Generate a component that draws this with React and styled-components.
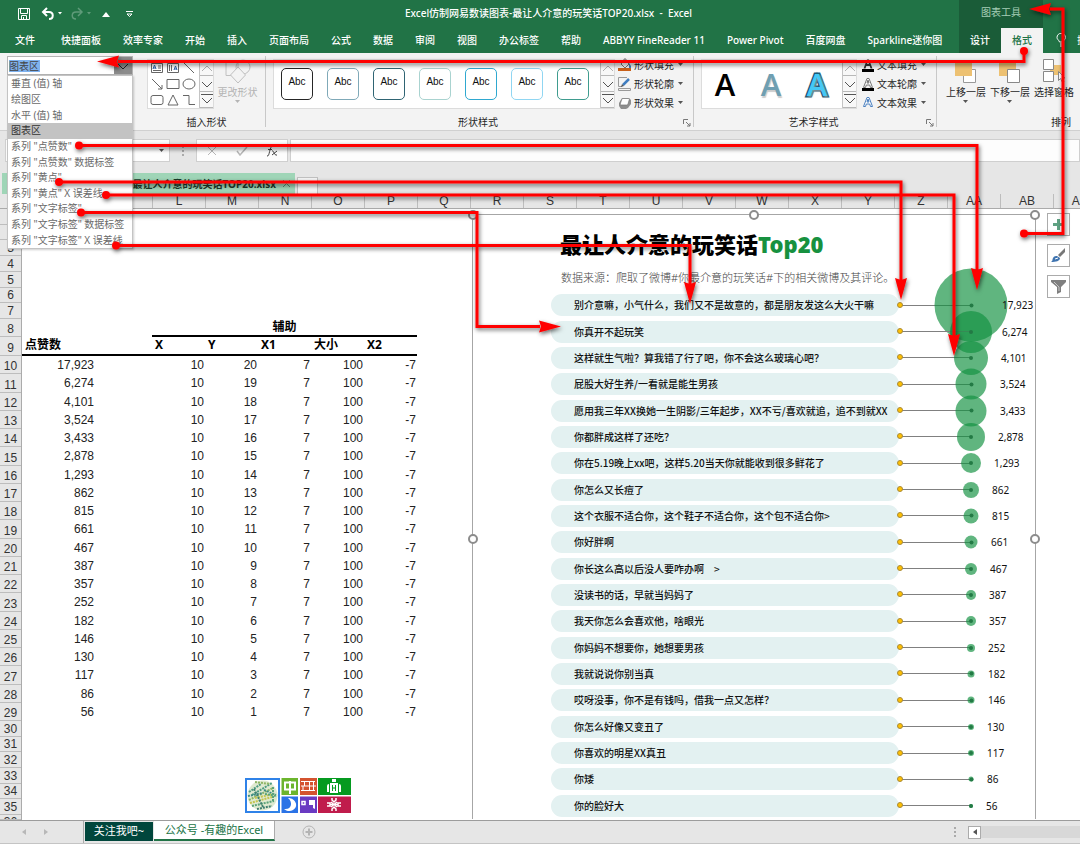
import React from "react";
import styled, { createGlobalStyle } from "styled-components";

const GlobalStyle = createGlobalStyle`
  *, *::before, *::after { box-sizing: border-box; }
  body {
    margin: 0;
    background: #e6e6e6;
    font-family: "Noto Sans", "Noto Sans CJK SC", sans-serif;
    font-size: 10px;
    color: #262626;
  }
  button, input, select {
    margin: 0;
    padding: 0;
    border: 0;
    border-radius: 0;
    background: none;
    font: inherit;
    color: inherit;
  }
  svg { display: block; flex: none; }
`;

const Page = styled.div`
  position: relative;
  display: flex;
  flex-direction: column;
  overflow: hidden;
`;

/* ---------- title bar and tabs ---------- */

const Header = styled.header`
  display: flex;
  background: #217346;
  color: #fff;
`;

const HeaderMain = styled.div`
  flex: 1 1 auto;
  min-width: 0;
`;

const TitleRow = styled.div`
  display: flex;
  align-items: center;
  height: 28px;
`;

const QuickAccess = styled.div`
  display: flex;
  flex: 0 0 138px;
  padding-left: 17px;
`;

const QuickButton = styled.button`
  width: ${(p) => p.$width}px;
  height: 16px;
`;

const WindowTitle = styled.h1`
  flex: 1;
  margin: 0;
  padding-bottom: 3px;
  font-size: 10px;
  font-weight: 500;
  line-height: 16px;
  text-align: center;
  white-space: pre;
`;

const TabList = styled.nav`
  display: flex;
  height: 25px;
  padding-left: 4px;
`;

const RibbonTab = styled.button`
  flex: none;
  padding: 0 11px 2px;
  height: 25px;
  font-weight: 500;
  white-space: nowrap;
  background: ${(p) => (p.$active ? "#f3f3f3" : "transparent")};
  color: ${(p) => (p.$active ? "#217346" : "#fff")};

  &:first-child { margin-right: ${(p) => (p.$context ? 0 : 4)}px; }
`;

const ContextTools = styled.div`
  flex: 0 0 83px;
  background: #1a5c38;
`;

const ContextLabel = styled.div`
  height: 28px;
  padding-bottom: 3px;
  line-height: 25px;
  text-align: center;
  color: #a5cdb6;
`;

const ContextTabs = styled.div`
  display: grid;
  grid-template-columns: 1fr 1fr;
`;

const TellMe = styled.div`
  display: flex;
  flex: 0 0 37px;
  align-items: center;
  gap: 10px;
  height: 25px;
  margin-top: 28px;
  padding: 0 0 2px 13px;
  overflow: hidden;
  white-space: nowrap;
`;

/* ---------- ribbon ---------- */

const Ribbon = styled.section`
  display: flex;
  height: 78px;
  background: #f3f3f3;
  border-bottom: 1px solid #d0d0d0;
`;

const Group = styled.div`
  display: flex;
  flex-direction: column;
  flex: ${(p) => (p.$width ? `0 0 ${p.$width}px` : "1 0 0")};
  position: relative;
  padding: 6px 0 0 7px;

  &::after {
    content: "";
    position: absolute;
    right: 0;
    top: 3px;
    width: 1px;
    height: 71px;
    background: ${(p) => (p.$width ? "#c8c8c8" : "transparent")};
  }
`;

const GroupBody = styled.div`
  display: flex;
  height: 50px;
  gap: ${(p) => p.$gap || 0}px;
`;

const GroupFooter = styled.div`
  display: flex;
  align-items: center;
  justify-content: center;
  height: 16px;
  margin-top: 4px;
  padding-left: ${(p) => p.$shift || 0}px;
`;

const GroupName = styled.span`
  flex: 1;
  text-align: center;
`;

const Launcher = styled.button`
  width: 8px;
  height: 8px;
  margin: 3px 3px 0 0;
`;

const Gallery = styled.div`
  display: flex;
  flex: none;
  height: 50px;
  border: 1px solid #dcdcdc;
  background: #fff;
`;

const ShapeGrid = styled.div`
  display: grid;
  grid-template-columns: repeat(3, 16px);
  grid-template-rows: repeat(3, 16px);
  width: 51px;
  padding-left: 1px;
`;

const PlainButton = styled.button`
  display: grid;
  place-items: center;
`;

const Scroller = styled.div`
  display: grid;
  grid-template-rows: repeat(3, 16px);
  width: 14px;
  background: #f8f8f8;
  border-left: 1px solid #c4c4c4;
`;

const ScrollButton = styled.button`
  display: grid;
  place-items: center;
  border-bottom: 1px solid #b8b8b8;
`;

const ChangeShape = styled.button`
  display: flex;
  flex-direction: column;
  align-items: center;
  width: 47px;
  color: #b4b4b4;
  line-height: 16px;
`;

const StyleCards = styled.div`
  display: flex;
  align-items: center;
  gap: 14px;
  width: 326px;
  padding: 0 7px;
`;

const StyleCard = styled.button`
  flex: 0 0 32px;
  height: 32px;
  padding-bottom: 6px;
  border: 1px solid ${(p) => p.$color};
  border-radius: 5px;
  background: #fff;
  color: #111;
  font-family: "Liberation Sans", sans-serif;
  font-size: 10px;
`;

const CommandList = styled.div`
  display: grid;
  grid-template-rows: repeat(3, 19px);
  margin-top: -4px;
`;

const Command = styled.button`
  display: flex;
  align-items: center;
  gap: 2px;
  white-space: nowrap;
`;

const CommandText = styled.span`
  padding-right: 2px;
`;

const WordArtCards = styled.div`
  display: grid;
  grid-template-columns: repeat(3, 46px);
  width: 140px;
`;

const WordArt = styled.button`
  font-family: "Open Sans", sans-serif;
  font-size: 31px;
  font-weight: 600;
  line-height: 48px;
  color: ${(p) => p.$color};
  -webkit-text-stroke: ${(p) => p.$stroke || "0 transparent"};
  paint-order: stroke fill;
  text-shadow: ${(p) => p.$shadow || "none"};
`;

const ArrangeButton = styled.button`
  display: flex;
  flex-direction: column;
  align-items: center;
  flex: 0 0 44px;
  line-height: 16px;
  white-space: nowrap;
`;

const ElementPicker = styled.div`
  position: relative;
  flex: 0 0 140px;
  padding: 3px 7px 0;
`;

const PickerField = styled.label`
  display: flex;
  width: 126px;
  height: 19px;
  border: 1px solid #b4b4b4;
  background: #fff;
`;

const PickerSelect = styled.select`
  flex: 1;
  min-width: 0;
  padding-left: 1px;
  appearance: none;
  background: linear-gradient(#7fb2ee, #7fb2ee) 1px 3px / 31px 12px no-repeat;
  color: #444;
`;

const PickerArrow = styled.span`
  display: grid;
  place-items: center;
  width: 18px;
  background: #8c8c8c;
`;

const PickerList = styled.ul`
  position: absolute;
  z-index: 3;
  left: 7px;
  top: 22px;
  display: flex;
  flex-direction: column;
  width: 126px;
  height: 174px;
  margin: 0;
  padding: 0;
  list-style: none;
  border: 1px solid #c4c4c4;
  background: #fff;
  box-shadow: 1px 1px 2px rgba(0, 0, 0, 0.2);
`;

const PickerOption = styled.li`
  display: flex;
  flex: 1;
  align-items: center;
  padding-left: 3px;
  color: ${(p) => (p.$selected ? "#333" : "#6a6a6a")};
  background: ${(p) => (p.$selected ? "#c3c3c3" : "transparent")};
  line-height: 15px;
  white-space: nowrap;
`;

/* ---------- formula bar and file tabs ---------- */

const FormulaRow = styled.div`
  display: flex;
  height: 42px;
  padding: 8px 0 11px 5px;
  background: #e6e6e6;
`;

const NameBox = styled.div`
  display: flex;
  align-items: center;
  flex: 0 0 165px;
  height: 23px;
  padding-right: 4px;
  border: 1px solid #cfcfcf;
  background: #fdfdfd;
`;

const NameInput = styled.input`
  flex: 1;
  min-width: 0;
`;

const Grip = styled.span`
  flex: 0 0 26px;
  align-self: center;
  height: 10px;
  background: radial-gradient(circle, #aaa 1px, transparent 1px) center / 4px 4px repeat-y;
`;

const FormulaButtons = styled.div`
  display: grid;
  grid-template-columns: repeat(3, 30px);
  height: 23px;
  border: 1px solid #cfcfcf;
  background: #fdfdfd;
`;

const FormulaInput = styled.input`
  flex: 1;
  height: 23px;
  margin-left: 2px;
  border: 1px solid #cfcfcf;
  background: #fdfdfd;
`;

const FileTabs = styled.div`
  display: flex;
  align-items: flex-end;
  gap: 2px;
  height: 21px;
  padding-left: 2px;
`;

const FileTab = styled.button`
  display: flex;
  align-items: center;
  justify-content: flex-end;
  gap: 6px;
  width: 293px;
  height: 21px;
  padding: 0 4px;
  background: #9fd5b7;
  color: #1c3a2a;
  font-weight: 700;
  white-space: nowrap;
`;

const NewFileTab = styled.button`
  width: 21px;
  height: 17px;
  border: 1px solid #c0c0c0;
  border-bottom: 0;
  background: #f5f5f5;
`;

/* ---------- worksheet ---------- */

const ColumnHeads = styled.div`
  display: flex;
  height: 15px;
  padding-left: 22px;
  overflow: hidden;
  background: #e6e6e6;
  border-bottom: 1px solid #ababab;
  font-family: "Liberation Sans", sans-serif;
  font-size: 12px;
  line-height: 14px;
  color: #333;
`;

const ColumnHead = styled.div`
  flex: 0 0 ${(p) => p.$width}px;
  text-align: center;
  border-right: 1px solid #bdbdbd;
`;

const Sheet = styled.main`
  display: flex;
  align-items: flex-start;
  overflow: hidden;
  background: #fff;
`;

const RowHeads = styled.div`
  flex: 0 0 22px;
  background: #e6e6e6;
  border-right: 1px solid #ababab;
  font-family: "Liberation Sans", sans-serif;
  font-size: 12px;
  color: #333;
`;

const RowBlock = styled.div`
  display: flex;
  flex-direction: column;
  height: ${(p) => p.$height}px;
`;

const RowHead = styled.div`
  display: flex;
  flex: 1 1 0;
  min-height: 0;
  align-items: ${(p) => (p.$cut ? "flex-start" : "flex-end")};
  justify-content: center;
  overflow: hidden;
  line-height: 14px;
  border-bottom: 1px solid #bdbdbd;
`;

const Cells = styled.div`
  flex: 0 0 450px;
  padding-top: 110px;
`;

const DataTable = styled.table`
  display: block;
  font-family: "Liberation Sans", sans-serif;
  font-size: 12px;
  color: #222;
`;

const TableHead = styled.thead`
  display: block;
  font-family: "Noto Sans", "Noto Sans CJK SC", sans-serif;
  font-size: 12px;
  color: #000;
`;

const TableBody = styled.tbody`
  display: flex;
  flex-direction: column;
  height: 365px;
`;

const TableRow = styled.tr`
  display: grid;
  flex: 1 1 0;
  grid-template-columns: 130px repeat(5, 53px);
  width: 396px;
`;

const HeadCell = styled.th`
  grid-column: ${(p) => p.$span || "auto"};
  height: ${(p) => (p.$span ? 18 : 19)}px;
  padding: 0 0 0 ${(p) => (p.$span ? 0 : 3)}px;
  border-bottom: 2px solid #000;
  line-height: 16px;
  font-weight: 700;
  text-align: ${(p) => (p.$span ? "center" : "left")};
`;

const Cell = styled.td`
  padding: 0 ${(p) => (p.$wide ? 58 : 1)}px 0 0;
  line-height: 18px;
  text-align: right;
`;

const Tiles = styled.div`
  padding: 57px 0 0 223px;
`;

/* ---------- chart ---------- */

const ChartFrame = styled.section`
  position: relative;
  flex: 1 1 auto;
  min-width: 0;
  margin-top: 5px;
  border: 1px solid #a6a6a6;
  border-bottom: 0;
`;

const Handle = styled.span`
  position: absolute;
  left: ${(p) => p.$x};
  top: ${(p) => p.$y}px;
  width: 10px;
  height: 10px;
  margin: -5px 0 0 -5px;
  border: 2px solid #8c8c8c;
  border-radius: 50%;
  background: #fff;
`;

const ChartTitle = styled.h2`
  margin: 13px 0 0 87px;
  font-size: 22px;
  font-weight: 900;
  line-height: 32px;
  color: #000;
  white-space: nowrap;
`;

const Accent = styled.span`
  color: #17913f;
`;

const ChartSource = styled.p`
  margin: 10px 0 0 88px;
  font-size: 11px;
  font-weight: 300;
  line-height: 16px;
  color: #444;
  white-space: nowrap;
`;

const Plot = styled.div`
  display: flex;
  flex-direction: column;
  height: 527px;
  margin-top: 6px;
  padding-left: 78px;
`;

const PlotRow = styled.div`
  display: flex;
  flex: 1 1 0;
  align-items: center;
`;

const Pill = styled.div`
  flex: 1 1 0;
  height: 22px;
  padding-left: 23px;
  border-radius: 11px;
  background: #e3f1f1;
  font-family: "Noto Sans CJK SC", sans-serif;
  font-weight: 500;
  line-height: 21px;
  color: #111;
  white-space: nowrap;
`;

const Connector = styled.div`
  position: relative;
  flex: 0 0 72px;
  height: 1px;
  background: #808080;

  &::before {
    content: "";
    position: absolute;
    left: -2px;
    top: -3px;
    width: 6px;
    height: 6px;
    border: 1px solid #a98a3a;
    border-radius: 50%;
    background: #ffc000;
  }
`;

const Bubble = styled.span`
  position: absolute;
  left: 100%;
  top: 50%;
  width: ${(p) => p.$size}px;
  height: ${(p) => p.$size}px;
  border-radius: 50%;
  transform: translate(-50%, -50%);
  background: rgba(18, 145, 64, 0.67);

  &::after {
    content: "";
    position: absolute;
    inset: 0;
    width: 4px;
    height: 4px;
    margin: auto;
    border-radius: 50%;
    background: #237a45;
  }
`;

const Amount = styled.span`
  position: relative;
  flex: 0 0 64px;
  padding-left: ${(p) => p.$offset}px;
  line-height: 16px;
  color: #111;
`;

const ChartButtons = styled.div`
  display: flex;
  flex: 0 0 44px;
  flex-direction: column;
  gap: 8px;
  padding: 4px 0 0 11px;
`;

const ChartButton = styled.button`
  display: grid;
  place-items: center;
  width: 23px;
  height: 23px;
  border: 1px solid #ababab;
  background: #fff;
`;

/* ---------- sheet tabs ---------- */

const SheetBar = styled.footer`
  display: flex;
  height: 24px;
  border-top: 1px solid #9c9c9c;
  border-bottom: 1px solid #c4c4c4;
  background: #e6e6e6;
`;

const SheetArrows = styled.div`
  display: flex;
  flex: 0 0 84px;
  align-items: center;
  gap: 16px;
  padding-left: 21px;
  border-right: 1px solid #ababab;
`;

const SheetTab = styled.button`
  flex: 0 0 ${(p) => p.$width}px;
  height: ${(p) => (p.$active ? 20 : 19)}px;
  margin: ${(p) => (p.$active ? "0" : "1px 1px 0")};
  padding-bottom: ${(p) => (p.$active ? 0 : 2)}px;
  background: ${(p) => (p.$active ? "#fff" : "#00463c")};
  border-bottom: ${(p) => (p.$active ? "2px solid #217346" : "0")};
  border-right: ${(p) => (p.$active ? "1px solid #ababab" : "0")};
  color: ${(p) => (p.$active ? "#217346" : "#fff")};
  font-size: 11px;
  line-height: 16px;
  white-space: nowrap;
`;

const AddSheet = styled.button`
  height: 22px;
  padding-left: 27px;
`;

const ScrollArea = styled.div`
  display: flex;
  align-items: center;
  height: 22px;
  margin-left: auto;
`;

const ScrollTrack = styled.div`
  width: 99px;
  height: 12px;
  background: #d8d8d8;
`;

const ScrollLeft = styled.button`
  display: grid;
  place-items: center;
  width: 13px;
  height: 13px;
  border: 1px solid #ababab;
  background: #fff;
`;

const Annotations = styled.svg`
  position: absolute;
  z-index: 5;
  left: 0;
  top: 0;
  pointer-events: none;
`;

/* ---------- content ---------- */

const tabs = ["文件", "快捷面板", "效率专家", "开始", "插入", "页面布局", "公式", "数据", "审阅", "视图", "办公标签", "帮助", "ABBYY FineReader 11", "Power Pivot", "百度网盘", "Sparkline迷你图"];

const elements = ["垂直 (值) 轴", "绘图区", "水平 (值) 轴", "图表区", "系列 \"点赞数\"", "系列 \"点赞数\" 数据标签", "系列 \"黄点\"", "系列 \"黄点\" X 误差线", "系列 \"文字标签\"", "系列 \"文字标签\" 数据标签", "系列 \"文字标签\" X 误差线"];

const cardColors = ["#262626", "#7fa9b8", "#2f6473", "#a9d3d0", "#2fa8d0", "#90d6f2", "#3f9c8f"];

const columns = ["L", "M", "N", "O", "P", "Q", "R", "S", "T", "U", "V", "W", "X", "Y", "Z", "AA", "AB", "AC"];

const jokes = [
  ["别介意嘛，小气什么，我们又不是故意的，都是朋友发这么大火干嘛", 17923, 73],
  ["你真开不起玩笑", 6274, 42],
  ["这样就生气啦？算我错了行了吧，你不会这么玻璃心吧？", 4101, 34],
  ["屁股大好生养/一看就是能生男孩", 3524, 31],
  ["愿用我三年XX换她一生阴影/三年起步，XX不亏/喜欢就追，追不到就XX", 3433, 31],
  ["你都胖成这样了还吃？", 2878, 28],
  ["你在5.19晚上xx吧，这样5.20当天你就能收到很多鲜花了", 1293, 20],
  ["你怎么又长痘了", 862, 16],
  ["这个衣服不适合你，这个鞋子不适合你，这个包不适合你>", 815, 15],
  ["你好胖啊", 661, 13],
  ["你长这么高以后没人要咋办啊　>", 467, 12],
  ["没读书的话，早就当妈妈了", 387, 10],
  ["我天你怎么会喜欢他，啥眼光", 357, 10],
  ["你妈妈不想要你，她想要男孩", 252, 8],
  ["我就说说你别当真", 182, 7],
  ["哎呀没事，你不是有钱吗，借我一点又怎样？", 146, 7],
  ["你怎么好像又变丑了", 130, 6],
  ["你喜欢的明星XX真丑", 117, 6],
  ["你矮", 86, 5],
  ["你的脸好大", 56, 4],
];

const range = (from, to) => Array.from({ length: to - from + 1 }, (_, i) => from + i);

const rowBlocks = [
  [110, range(1, 7)],
  [18, [8]],
  [19, [9]],
  [365, range(10, 29)],
  [94, range(30, 35)],
  [5, [36]],
];

/* ---------- icons ---------- */

const Caret = ({ color = "#555" }) => (
  <svg width="6" height="4" viewBox="0 0 6 4"><path d="M0 0h5L2.5 3z" fill={color} /></svg>
);

const Chevron = ({ up, bar, color = "#555" }) => (
  <svg width="12" height="14" viewBox="0 0 12 14" fill="none" stroke={color}>
    {bar && <path d="M0 1.5h12" />}
    <path d={up ? "M1 10l5-5 5 5" : "M1 5l5 5 5-5"} />
  </svg>
);

const GalleryScroller = () => (
  <Scroller>
    <ScrollButton aria-label="上一行"><Chevron up color="#b0b0b0" /></ScrollButton>
    <ScrollButton aria-label="下一行"><Chevron /></ScrollButton>
    <ScrollButton aria-label="更多"><Chevron bar /></ScrollButton>
  </Scroller>
);

const LauncherIcon = () => (
  <svg width="8" height="8" viewBox="0 0 8 8" fill="none" stroke="#777">
    <path d="M.5 5V.5H5M3 3l4 4M7 4v3H4" />
  </svg>
);

const shapes = [
  ["文本框", <><path d="M1.5 2.500h11v9h-11zM8 5h3M8 7h3M3 9.500h8" /><path d="M3 8l1.500-4L6 8M3.500 7h2" stroke="#2b5fa5" /></>],
  ["竖排文本框", <><path d="M1.5 2.500h11v9h-11zM3.500 4v6M5.500 4v6" /><path d="M8 9l1.500-4L11 9M8.500 8h2" stroke="#2b5fa5" /></>],
  ["直线", <path d="M2 2l10 10" />],
  ["箭头", <path d="M2 2l10 10M12 8v4H8" />],
  ["矩形", <path d="M1 2.500h12v9H1z" />],
  ["椭圆", <ellipse cx="7" cy="7" rx="6" ry="5" />],
  ["圆角矩形", <rect x="1" y="2.5" width="12" height="9" rx="2" />],
  ["三角形", <path d="M7 2l5 10H2z" />],
  ["连接符", <path d="M1 2.500h6v9h6" />],
];

const FillIcon = () => (
  <svg width="14" height="14" viewBox="0 0 14 14">
    <path d="M3 6l4-4 4 4-4 4zM6 4V1h2v3" fill="#fff" stroke="#777" />
    <path d="M11 5l2 3v2h-2z" fill="#3f7dc0" />
    <path d="M0 10h13v3H0z" fill="#c8601a" />
  </svg>
);
const OutlineIcon = () => (
  <svg width="14" height="14" viewBox="0 0 14 14" fill="none">
    <path d="M9 .5H.5v9H4M.5 11.500h12v2H.5z" stroke="#9a9a9a" />
    <path d="M5 8l6-6" stroke="#3f7dc0" strokeWidth="2.500" />
    <path d="M3 10l3-1-2-2z" fill="#555" />
  </svg>
);
const EffectIcon = () => (
  <svg width="14" height="14" viewBox="0 0 14 14">
    <path d="M4 2h7l2 2v4l-3 4-2 1H3l-2-3V7z" fill="#8f8f8f" />
    <path d="M5 2.500h5.500q1 0 .8 1L10 8q-.3 1-1.300 1H3q-1 0-.8-1l1.500-4.500q.3-1 1.300-1z" fill="#fff" stroke="#777" strokeWidth=".7" />
  </svg>
);
const LetterIcon = ({ fill, stroke, bar }) => (
  <svg width="14" height="14" viewBox="0 0 14 14">
    <path d="M2.500 10.500L6 1.500h2l3.500 9h-2L8.700 8H5.300l-.8 2.500zM6 6h2L7 3z" fill={fill} stroke={stroke} />
    {bar && <path d="M1 11h12v3H1z" fill="#000" />}
  </svg>
);

const ArrangeIcon = ({ kind }) => (
  <svg width="26" height="25" viewBox="0 0 26 25">
    {kind === "front" && (
      <>
        <path d="M10.500 10.500h12v13h-12z" fill="#fff" stroke="#999" />
        <path d="M2 1h17v16H2z" fill="#edc172" />
      </>
    )}
    {kind === "back" && (
      <>
        <path d="M2 1h17v16H2z" fill="#edc172" />
        <path d="M10.500 10.500h12v13h-12z" fill="#fff" stroke="#888" />
      </>
    )}
    {kind === "pane" && (
      <>
        <path d="M9 6h11v10H9z" fill="#edc172" />
        <path d="M2.500.5h10v10h-10zM2.500 12.500h10v10h-10z" fill="#fff" stroke="#888" />
        <path d="M17.500 12.500v9l2-2 2 4 1.500-1-2-3.500h3z" fill="#fff" stroke="#888" />
      </>
    )}
  </svg>
);

const LogoTiles = () => (
  <svg width="106" height="35" viewBox="0 0 106 35">
    <path d="M1 1h33v33H1z" fill="#fff" stroke="#2f82e8" strokeWidth="2" />
    <circle cx="17.500" cy="17.500" r="15" fill="#dfe9d0" />
    <g fill="none" strokeWidth="2" strokeDasharray="2 1">
      <path d="M4 14l12-8M7 17L27 5" stroke="#4c9b82" />
      <path d="M10 4l15 2M4 22l24-12" stroke="#8fb565" />
      <path d="M3 18l15-3M19 12l12 5" stroke="#3f8c86" />
      <path d="M5 25l22-6M10 20l19-4" stroke="#c5c54f" />
      <path d="M7 28l22-5M20 16l12 2M28 9v15" stroke="#5ba37a" />
      <path d="M12 31l15-3M9 11l9 18" stroke="#3f7f70" />
    </g>
    <path d="M36.500 0H53v17H36.500z" fill="#6cb52d" />
    <path d="M40 4.500h10v7H40zM45 3v13" fill="none" stroke="#fff" strokeWidth="2" />
    <path d="M55 0h17v17H55z" fill="#d4532f" />
    <path d="M56 3.500h14M56 8h15M56 12.500h14M59.500 3v5M64.500 3v9M68.500 3v9M58 8v5" fill="none" stroke="#fff" />
    <path d="M73 0h33v17H73z" fill="#059a20" />
    <path d="M87 1h4v3h-4zM85 5h8v10h-8zM82 8q0-2 2-2v8h-2zM94 6q2 0 2 2v6h-2z" fill="#fff" />
    <path d="M87.500 7v6M90.500 7v6M87.500 10h3" stroke="#059a20" />
    <path d="M36.500 18.500H53V35H36.500z" fill="#2b73e6" />
    <path d="M43 20c8 0 11 9 5 12-3 2-7 1-9-1 8 1 9-7 4-11z" fill="#fff" />
    <path d="M55 18.500h17V35H55z" fill="#6a3bc2" />
    <path d="M57 23.500h3v3h-3z" fill="none" stroke="#fff" strokeWidth="1.500" />
    <path d="M64 22h6v9l-2-1v-3h-4z" fill="#fff" />
    <path d="M73 18.500h33V35H73z" fill="#c01c4c" />
    <path d="M87 20v2l2 2 2-2v-2M87 33v-2l2-2 2 2v2M82 25h3v3h-3M96 25h-3v3h3M85 26.500h8M86 24l6 5M92 24l-6 5" fill="none" stroke="#fff" strokeWidth="1.500" />
  </svg>
);

const ArrowHead = ({ x, y, angle }) => (
  <path d="M0 0L-22-6L-20 0L-22 6z" transform={`translate(${x} ${y}) rotate(${angle})`} fill="#f00" stroke="none" />
);

const arrows = [
  { d: "M1024 51V61.500H118", dot: [1024, 51], head: [97, 61.5, 180] },
  { d: "M1024 233.500H1063V9H1050", dot: [1024, 233.5], head: [1029, 9, 180] },
  { d: "M79 145.500H977V270", dot: [79, 145.5], head: [977, 290, 90] },
  { d: "M59 182H901V280", dot: [59, 182], head: [901, 300, 90] },
  { d: "M106 195H954V336", dot: [106, 195], head: [954, 356, 90] },
  { d: "M81 212.500H477V326.500H540", dot: [81, 212.5], head: [561, 326.5, 0] },
  { d: "M116 245.500H690V285", dot: [116, 245.5], head: [690, 304, 90] },
];

export default function App() {
  return (
    <Page>
      <GlobalStyle />
      <Header>
        <HeaderMain>
          <TitleRow>
            <QuickAccess>
              <QuickButton $width={24} aria-label="保存">
                <svg width="14" height="14" viewBox="0 0 14 14" fill="none" stroke="#fff">
                  <path d="M1.5 1.500h11v11h-11zM3.500 1.500v5h7v-5M4.500 12.500v-4h5v4M6.500 10v2" />
                </svg>
              </QuickButton>
              <QuickButton $width={30} aria-label="撤消">
                <svg width="22" height="14" viewBox="0 0 22 14" fill="none">
                  <path d="M6 1L2 5l4 4M2 5h6c5 0 5 7 0 7" stroke="#fff" strokeWidth="2" />
                  <path d="M17 5h4l-2 2.500z" fill="#fff" />
                </svg>
              </QuickButton>
              <QuickButton $width={30} aria-label="恢复">
                <svg width="22" height="14" viewBox="0 0 22 14" fill="none">
                  <path d="M7 1l4 4-4 4M11 5H5c-5 0-5 7 0 7" stroke="#5f9b7a" strokeWidth="1.500" />
                  <path d="M16 5h4l-2 2.500z" fill="#5f9b7a" />
                </svg>
              </QuickButton>
              <QuickButton $width={24} aria-label="形状">
                <svg width="10" height="14" viewBox="0 0 10 14"><path d="M1 10l4-5 4 5z" fill="#fff" /></svg>
              </QuickButton>
              <QuickButton $width={10} aria-label="自定义">
                <svg width="10" height="14" viewBox="0 0 10 14" fill="none" stroke="#fff"><path d="M1 4.500h7M2 7h5L4.500 9.500z" /></svg>
              </QuickButton>
            </QuickAccess>
            <WindowTitle>{"Excel仿制网易数读图表-最让人介意的玩笑话TOP20.xlsx  -  Excel"}</WindowTitle>
          </TitleRow>
          <TabList>
            {tabs.map((t) => <RibbonTab key={t}>{t}</RibbonTab>)}
          </TabList>
        </HeaderMain>
        <ContextTools>
          <ContextLabel>图表工具</ContextLabel>
          <ContextTabs>
            <RibbonTab $context>设计</RibbonTab>
            <RibbonTab $context $active>格式</RibbonTab>
          </ContextTabs>
        </ContextTools>
        <TellMe>
          <svg width="11" height="14" viewBox="0 0 11 14" fill="none" stroke="#fff">
            <path d="M3.500 9C3 7 1 6.500 1 4.500a4.200 4.200 0 0 1 8.500 0C9.500 6.500 7.500 7 7 9zM4 11h3M4 13h3" />
          </svg>
          操作说明
        </TellMe>
      </Header>

      <Ribbon>
        <ElementPicker>
          <PickerField>
            <PickerSelect aria-label="图表元素" defaultValue="图表区">
              {elements.map((e) => <option key={e}>{e}</option>)}
            </PickerSelect>
            <PickerArrow><Chevron color="#222" /></PickerArrow>
          </PickerField>
          <PickerList role="listbox" aria-label="图表元素列表">
            {elements.map((e) => (
              <PickerOption key={e} role="option" aria-selected={e === "图表区"} $selected={e === "图表区"}>{e}</PickerOption>
            ))}
          </PickerList>
        </ElementPicker>

        <Group $width={126}>
          <GroupBody>
            <Gallery>
              <ShapeGrid>
                {shapes.map(([name, drawing]) => (
                  <PlainButton key={name} aria-label={name}>
                    <svg width="14" height="14" viewBox="0 0 14 14" fill="none" stroke="#666">{drawing}</svg>
                  </PlainButton>
                ))}
              </ShapeGrid>
              <GalleryScroller />
            </Gallery>
            <ChangeShape>
              <svg width="26" height="25" viewBox="0 0 26 25" fill="none" stroke="#c0c0c0">
                <path d="M1 1.500h12v15H1z" />
                <circle cx="18" cy="8" r="7" />
                <path d="M13 8l7.500 8-7.500 8-7.500-8z" fill="#f3f3f3" />
              </svg>
              更改形状
              <Caret color="#b4b4b4" />
            </ChangeShape>
          </GroupBody>
          <GroupFooter><GroupName>插入形状</GroupName></GroupFooter>
        </Group>

        <Group $width={428}>
          <GroupBody $gap={3}>
            <Gallery>
              <StyleCards>
                {cardColors.map((c) => <StyleCard key={c} $color={c}>Abc</StyleCard>)}
              </StyleCards>
              <GalleryScroller />
            </Gallery>
            <CommandList>
              <Command><FillIcon /><CommandText>形状填充</CommandText><Caret /></Command>
              <Command><OutlineIcon /><CommandText>形状轮廓</CommandText><Caret /></Command>
              <Command><EffectIcon /><CommandText>形状效果</CommandText><Caret /></Command>
            </CommandList>
          </GroupBody>
          <GroupFooter>
            <GroupName>形状样式</GroupName>
            <Launcher aria-label="设置形状格式"><LauncherIcon /></Launcher>
          </GroupFooter>
        </Group>

        <Group $width={243}>
          <GroupBody $gap={4}>
            <Gallery>
              <WordArtCards>
                <WordArt $color="#000">A</WordArt>
                <WordArt $color="#6f9fb2" $shadow="1px 2px 1px #ccc">A</WordArt>
                <WordArt $color="#45c8f5" $stroke="3px #155a78" $shadow="1px 1px 2px #999">A</WordArt>
              </WordArtCards>
              <GalleryScroller />
            </Gallery>
            <CommandList>
              <Command><LetterIcon fill="#333" stroke="none" bar /><CommandText>文本填充</CommandText><Caret /></Command>
              <Command><LetterIcon fill="#fff" stroke="#777" bar /><CommandText>文本轮廓</CommandText><Caret /></Command>
              <Command><LetterIcon fill="#fff" stroke="#4a80c0" /><CommandText>文本效果</CommandText><Caret /></Command>
            </CommandList>
          </GroupBody>
          <GroupFooter>
            <GroupName>艺术字样式</GroupName>
            <Launcher aria-label="设置文本效果格式"><LauncherIcon /></Launcher>
          </GroupFooter>
        </Group>

        <Group>
          <GroupBody>
            <ArrangeButton><ArrangeIcon kind="front" />上移一层<Caret /></ArrangeButton>
            <ArrangeButton><ArrangeIcon kind="back" />下移一层<Caret /></ArrangeButton>
            <ArrangeButton><ArrangeIcon kind="pane" />选择窗格</ArrangeButton>
          </GroupBody>
          <GroupFooter $shift={98}><GroupName>排列</GroupName></GroupFooter>
        </Group>
      </Ribbon>

      <FormulaRow>
        <NameBox><NameInput aria-label="名称框" /><Caret /></NameBox>
        <Grip />
        <FormulaButtons>
          <PlainButton aria-label="取消">
            <svg width="10" height="10" viewBox="0 0 10 10" stroke="#b8b8b8"><path d="M1 1l8 8M9 1L1 9" /></svg>
          </PlainButton>
          <PlainButton aria-label="输入">
            <svg width="12" height="10" viewBox="0 0 12 10" fill="none" stroke="#b8b8b8" strokeWidth="1.500"><path d="M1 5l3 4 7-8" /></svg>
          </PlainButton>
          <PlainButton aria-label="插入函数">
            <svg width="12" height="12" viewBox="0 0 12 12" fill="none" stroke="#444">
              <path d="M1 11c3 1 2-10 6-10M2 4.500h4M6 6c2-1 2 5 5 4M11 6L6 10" />
            </svg>
          </PlainButton>
        </FormulaButtons>
        <FormulaInput aria-label="编辑栏" />
      </FormulaRow>

      <FileTabs>
        <FileTab>
          最让人介意的玩笑话TOP20.xlsx
          <svg width="9" height="9" viewBox="0 0 9 9" stroke="#5c8a70"><path d="M1 1l7 7M8 1L1 8" /></svg>
        </FileTab>
        <NewFileTab aria-label="新建" />
      </FileTabs>

      <ColumnHeads>
        <ColumnHead $width={75} />
        <ColumnHead $width={56} />
        {columns.map((c) => <ColumnHead key={c} $width={53}>{c}</ColumnHead>)}
      </ColumnHeads>

      <Sheet>
        <RowHeads>
          {rowBlocks.map(([height, rows]) => (
            <RowBlock key={rows[0]} $height={height}>
              {rows.map((r) => <RowHead key={r} $cut={r === 36}>{r > 2 ? r : null}</RowHead>)}
            </RowBlock>
          ))}
        </RowHeads>

        <Cells>
          <DataTable>
            <TableHead>
              <TableRow>
                <HeadCell $span="2 / 7" colSpan={5} scope="colgroup">辅助</HeadCell>
              </TableRow>
              <TableRow>
                {["点赞数", "X", "Y", "X1", "大小", "X2"].map((h) => <HeadCell key={h} scope="col">{h}</HeadCell>)}
              </TableRow>
            </TableHead>
            <TableBody>
              {jokes.map(([, likes], i) => (
                <TableRow key={likes}>
                  <Cell $wide>{likes.toLocaleString("en-US")}</Cell>
                  <Cell>10</Cell>
                  <Cell>{20 - i}</Cell>
                  <Cell>7</Cell>
                  <Cell>100</Cell>
                  <Cell>-7</Cell>
                </TableRow>
              ))}
            </TableBody>
          </DataTable>
          <Tiles><LogoTiles /></Tiles>
        </Cells>

        <ChartFrame>
          <ChartTitle>最让人介意的玩笑话<Accent>Top20</Accent></ChartTitle>
          <ChartSource>数据来源：爬取了微博#你最介意的玩笑话#下的相关微博及其评论。</ChartSource>
          <Plot>
            {jokes.map(([text, likes, size]) => (
              <PlotRow key={likes}>
                <Pill>{text}</Pill>
                <Connector><Bubble $size={size} /></Connector>
                <Amount $offset={Math.min(31, Math.round(size / 2) + 13)}>{likes.toLocaleString("en-US")}</Amount>
              </PlotRow>
            ))}
          </Plot>
          <Handle $x="0%" $y={0} />
          <Handle $x="50%" $y={0} />
          <Handle $x="100%" $y={0} />
          <Handle $x="0%" $y={324} />
          <Handle $x="100%" $y={324} />
        </ChartFrame>

        <ChartButtons>
          <ChartButton aria-label="图表元素">
            <svg width="13" height="13" viewBox="0 0 13 13"><path d="M5 1h3v4h4v3H8v4H5V8H1V5h4z" fill="#5fa283" /></svg>
          </ChartButton>
          <ChartButton aria-label="图表样式">
            <svg width="17" height="17" viewBox="0 0 17 17">
              <path d="M15 1v4l-5 5-2-2z" fill="#777" />
              <path d="M7 9l3 2c0 3-4 4-9 4 2-1 1-2 2-4 1-2 3-2 4-2z" fill="#3f74b0" />
              <path d="M5 12l3-1" stroke="#fff" />
            </svg>
          </ChartButton>
          <ChartButton aria-label="图表筛选器">
            <svg width="17" height="17" viewBox="0 0 17 17">
              <path d="M1 2h15v2l-5 5v5l-4 2V9L1 4z" fill="#7f7f7f" />
              <path d="M4 4l5 5v4" fill="none" stroke="#c8c8c8" />
            </svg>
          </ChartButton>
        </ChartButtons>
      </Sheet>

      <SheetBar>
        <SheetArrows>
          <svg width="6" height="8" viewBox="0 0 6 8"><path d="M5 1v6L1 4z" fill="#b8b8b8" /></svg>
          <svg width="6" height="8" viewBox="0 0 6 8"><path d="M1 1v6l4-3z" fill="#b8b8b8" /></svg>
        </SheetArrows>
        <SheetTab $width={68}>关注我吧~</SheetTab>
        <SheetTab $width={121} $active>公众号 -有趣的Excel</SheetTab>
        <AddSheet aria-label="新工作表">
          <svg width="14" height="14" viewBox="0 0 14 14" fill="none" stroke="#b4b4b4"><circle cx="7" cy="7" r="6" /><path d="M7 3.500v7M3.500 7h7" strokeWidth="2" /></svg>
        </AddSheet>
        <ScrollArea>
          <Grip />
          <ScrollLeft aria-label="向左滚动">
            <svg width="6" height="8" viewBox="0 0 6 8"><path d="M5 1v6L1 4z" fill="#555" /></svg>
          </ScrollLeft>
          <ScrollTrack />
        </ScrollArea>
      </SheetBar>

      <Annotations width="1080" height="844" viewBox="0 0 1080 844" aria-hidden="true">
        <defs>
          <filter id="shadow" filterUnits="userSpaceOnUse" x="0" y="0" width="1080" height="844">
            <feDropShadow dx="1" dy="2" stdDeviation="2" floodColor="#000" floodOpacity="0.6" />
          </filter>
        </defs>
        <g filter="url(#shadow)" fill="none" stroke="#f00" strokeWidth="3">
          {arrows.map(({ d, dot, head }) => (
            <g key={d}>
              <path d={d} />
              <circle cx={dot[0]} cy={dot[1]} r="4" fill="#f00" stroke="none" />
              <ArrowHead x={head[0]} y={head[1]} angle={head[2]} />
            </g>
          ))}
        </g>
      </Annotations>
    </Page>
  );
}
